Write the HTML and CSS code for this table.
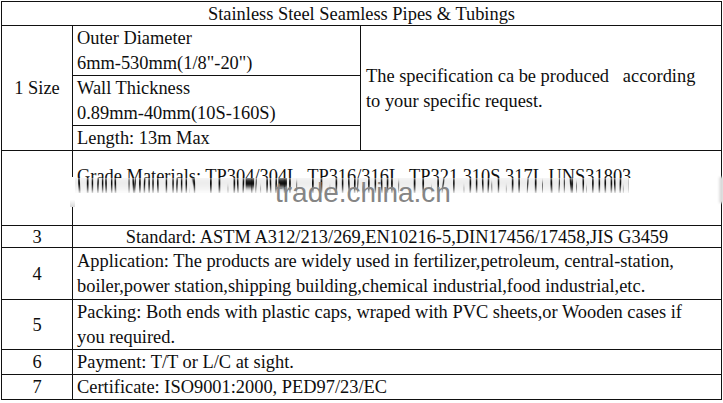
FILE: index.html
```html
<!DOCTYPE html>
<html>
<head>
<meta charset="utf-8">
<title>Stainless Steel Seamless Pipes &amp; Tubings</title>
<link rel="stylesheet" href="styles.css">
</head>
<body>
<div class="spec">
  <div class="cell title">Stainless Steel Seamless Pipes &amp; Tubings</div>

  <div class="cell num size-num">1 Size</div>
  <div class="cell txt od">Outer Diameter<br>6mm-530mm(1/8"-20")</div>
  <div class="cell txt spec-note">The specification ca be produced&nbsp;&nbsp; according<br>to your specific request.</div>
  <div class="cell txt wt">Wall Thickness<br>0.89mm-40mm(10S-160S)</div>
  <div class="cell txt len">Length: 13m Max</div>

  <div class="cell num grade-num"></div>
  <div class="cell grade">
    <div class="grade-text">Grade Materials: TP304/304L, TP316/316L, TP321,310S,317L,UNS31803</div>
    <div class="streak"><div class="streak-text">Grade Materials: TP304/304L, TP316/316L, TP321,310S,317L,UNS31803</div></div>
    <div class="gap-left"></div>
    <div class="edge-right"></div>
    <div class="watermark">trade.china.cn</div>
  </div>

  <div class="cell num">3</div>
  <div class="cell wide center">Standard: ASTM A312/213/269,EN10216-5,DIN17456/17458,JIS G3459</div>

  <div class="cell num">4</div>
  <div class="cell wide txt">Application: The products are widely used in fertilizer,petroleum, central-station,<br>boiler,power station,shipping building,chemical industrial,food industrial,etc.</div>

  <div class="cell num">5</div>
  <div class="cell wide txt">Packing: Both ends with plastic caps, wraped with PVC sheets,or Wooden cases if<br>you required.</div>

  <div class="cell num">6</div>
  <div class="cell wide txt">Payment: T/T or L/C at sight.</div>

  <div class="cell num">7</div>
  <div class="cell wide txt">Certificate: ISO9001:2000, PED97/23/EC</div>
</div>
</body>
</html>
```

FILE: styles.css
```css
html, body {
  margin: 0;
  padding: 0;
  background: #fff;
}
body {
  font-family: "Liberation Serif", "Times New Roman", serif;
  font-size: 18.4px;
  color: #0e0e0e;
}
.spec {
  display: grid;
  grid-template-columns: 71px 288px 361px;
  grid-template-rows: 24px 50px 50px 25px 75px 22px 52px 50px 25px 25px;
  width: 721px;
  margin: 1px 0 0 1px;
  border-left: 1px solid #111;
  border-top: 1px solid #111;
  box-sizing: border-box;
}
.cell {
  box-sizing: border-box;
  border-right: 1px solid #111;
  border-bottom: 1px solid #111;
  line-height: 25px;
  padding: 1px 4px 0;
  white-space: nowrap;
  display: flex;
  align-items: center;
  min-width: 0;
}
.txt {
  justify-content: flex-start;
}
.title {
  grid-column: 1 / 4;
  justify-content: center;
}
.num {
  justify-content: center;
  padding: 1px 0 0;
}
.size-num {
  grid-column: 1;
  grid-row: 2 / 5;
}
.od { grid-column: 2; grid-row: 2; }
.wt { grid-column: 2; grid-row: 3; }
.len { grid-column: 2; grid-row: 4; }
.spec-note {
  grid-column: 3;
  grid-row: 2 / 5;
  padding-left: 5px;
}
.grade-num {
  grid-column: 1;
  grid-row: 5;
}
.wide {
  grid-column: 2 / 4;
}
.center {
  justify-content: center;
}
.grade {
  grid-column: 2 / 4;
  grid-row: 5;
  position: relative;
  display: block;
  padding: 0;
}
.grade-text {
  padding: 13px 0 0 4px;
  height: 14px;
  overflow: hidden;
  line-height: 25px;
}
.streak {
  position: absolute;
  left: 0;
  top: 27px;
  width: 556px;
  height: 2px;
  overflow: hidden;
  transform: scaleY(7.5);
  transform-origin: 0 0;
  filter: blur(0.3px);
  background: rgba(0, 0, 0, 0.07);
  -webkit-mask-image: linear-gradient(#000 40%, rgba(0, 0, 0, 0.3));
  mask-image: linear-gradient(#000 40%, rgba(0, 0, 0, 0.3));
}
.streak-text {
  position: absolute;
  left: 4px;
  top: -14.5px;
  line-height: 25px;
  white-space: nowrap;
}
.gap-left {
  position: absolute;
  left: -3px;
  top: 26px;
  width: 5px;
  height: 30px;
  background: linear-gradient(#fff 75%, #d8d8d8);
  filter: blur(0.5px);
}
.edge-right {
  position: absolute;
  right: -3px;
  top: 26px;
  width: 6px;
  height: 26px;
  background: linear-gradient(90deg, #fff, #cfcfcf 60%, #eee);
  filter: blur(1px);
}
.watermark {
  position: absolute;
  left: 202px;
  top: 28px;
  font-family: "Liberation Sans", Arial, sans-serif;
  font-size: 28px;
  line-height: 28px;
  color: #858585;
}
```
